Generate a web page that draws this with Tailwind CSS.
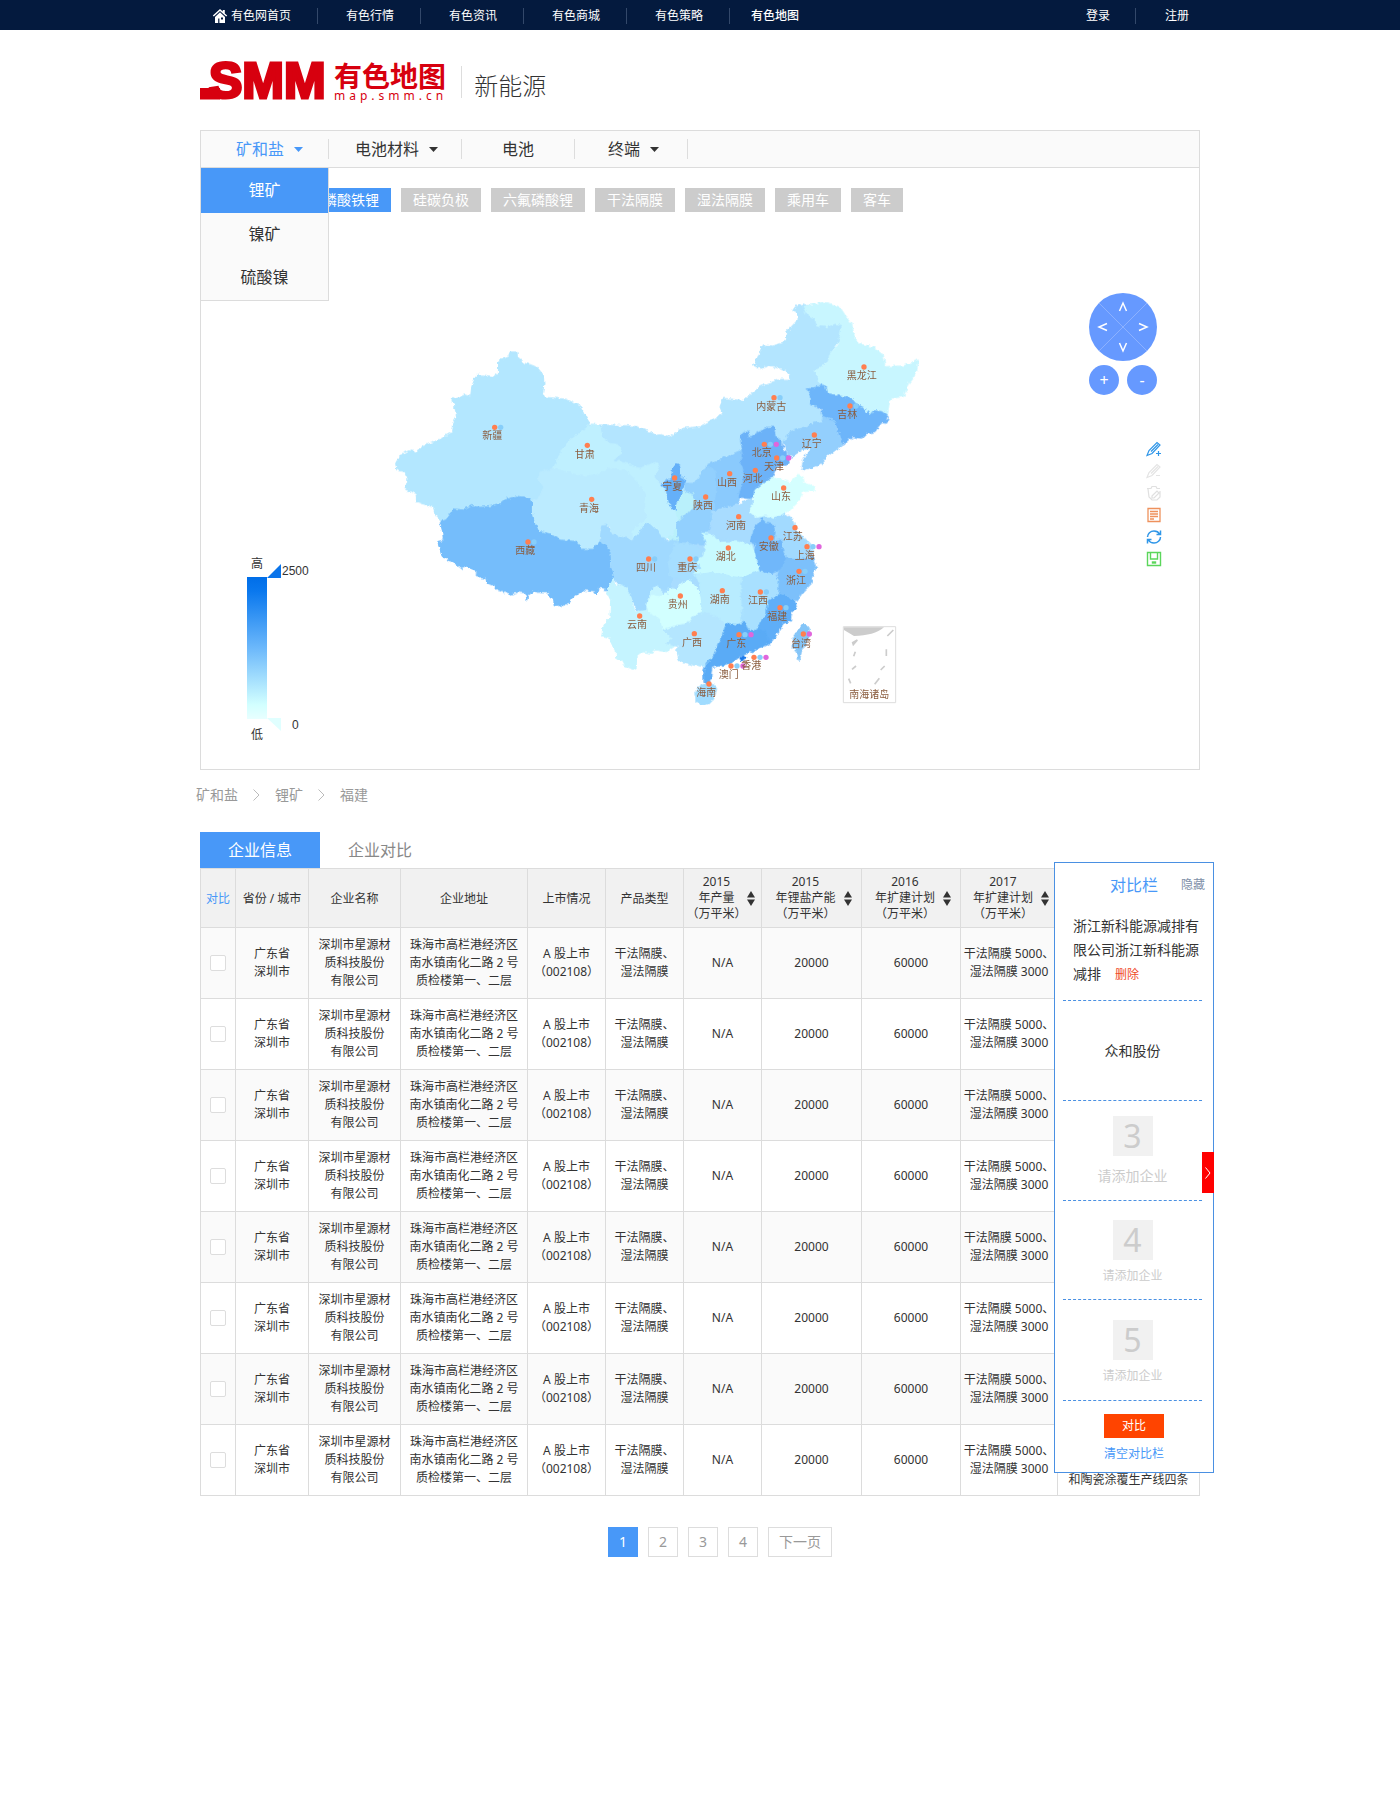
<!DOCTYPE html>
<html lang="zh-CN">
<head>
<meta charset="utf-8">
<meta name="viewport" content="width=device-width, initial-scale=1">
<title>SMM 有色地图 - 新能源</title>
<script src="https://cdn.jsdelivr.net/npm/@tailwindcss/browser@4"></script>
</head>
<body class="min-h-screen bg-white font-['Noto_Sans','Noto_Sans_CJK_SC',sans-serif] text-xs text-[#333]">

<nav class="bg-[#041a3e] text-xs text-white">
  <div class="mx-auto flex h-[30px] max-w-[1000px] items-center pt-0.5">
    <a href="#" class="flex h-4 w-[118px] items-center gap-[3px] border-r border-[#33486a] pl-3">
      <svg class="size-4" viewBox="0 0 16 16" fill="#fff"><path d="M8 1 .8 7.6l1 1L8 3l6.200 5.600 1-1L12.800 5.400V2h-2v1.600z"/><path d="M8 4.300 3 8.900V15h3.200v-4.500h1.200V15H13V8.900zM9 9.500h2v2H9z" fill-rule="evenodd"/></svg>
      <span>有色网首页</span></a>
    <a href="#" class="flex h-4 w-[103px] items-center border-r border-[#33486a] pl-7">有色行情</a>
    <a href="#" class="flex h-4 w-[103px] items-center border-r border-[#33486a] pl-7">有色资讯</a>
    <a href="#" class="flex h-4 w-[103px] items-center border-r border-[#33486a] pl-7">有色商城</a>
    <a href="#" class="flex h-4 w-[103px] items-center border-r border-[#33486a] pl-7">有色策略</a>
    <a href="#" class="flex h-4 items-center pl-[21px] font-medium">有色地图</a>
    <a href="#" class="ml-auto flex h-4 w-[50px] items-center border-r border-[#33486a]">登录</a>
    <a href="#" class="flex h-4 items-center pr-[11px] pl-[29px]">注册</a>
  </div>
</nav>

<div class="mx-auto max-w-[1000px]">
  <header class="flex h-[100px] items-start pt-8">
    <a href="#" class="flex gap-2 text-[#d7000f]" aria-label="SMM 有色地图">
      <svg class="h-10 w-[126px] overflow-visible" viewBox="0 0 126 40" fill="currentColor">
        <path d="M0 26h20v11.500H0z"/>
        <text x="9" y="36" font-family="Liberation Sans, sans-serif" font-size="50" font-weight="700" stroke="currentColor" stroke-width="3">SMM</text>
      </svg>
      <span class="flex flex-col">
        <span class="text-[28px] leading-7 font-bold">有色地图</span>
        <span class="text-xs leading-3 tracking-[4px]">map.smm.cn</span>
      </span>
    </a>
    <h1 class="mt-1 ml-3.5 flex h-8 items-center border-l border-[#ddd] pt-2 pl-3 text-2xl font-light">新能源</h1>
  </header>

  <section class="border border-[#dcdcdc]">
    <div class="relative z-10 flex h-[37px] items-center border-b border-[#dcdcdc] bg-[#fafafa] text-base">
      <a href="#" class="flex h-5 w-32 items-center gap-2.5 border-r border-[#ddd] pl-[35px] text-[#4898f8]">矿和盐<svg class="h-[5px] w-[9px]" viewBox="0 0 9 5" fill="currentColor"><path d="M0 0h9L4.500 5z"/></svg></a>
      <a href="#" class="flex h-5 w-[133px] items-center gap-2.5 border-r border-[#ddd] pl-[26px]">电池材料<svg class="h-[5px] w-[9px]" viewBox="0 0 9 5" fill="currentColor"><path d="M0 0h9L4.500 5z"/></svg></a>
      <a href="#" class="flex h-5 w-[113px] items-center justify-center border-r border-[#ddd]">电池</a>
      <a href="#" class="flex h-5 w-[113px] items-center gap-2.5 border-r border-[#ddd] pl-[33px]">终端<svg class="h-[5px] w-[9px]" viewBox="0 0 9 5" fill="currentColor"><path d="M0 0h9L4.500 5z"/></svg></a>
      <div class="absolute top-[37px] -left-px w-[129px] border border-t-0 border-[#dcdcdc] bg-[#fafafa] pb-px text-center">
        <a href="#" class="block bg-[#4898f8] leading-[45px] text-white">锂矿</a>
        <a href="#" class="block leading-[43px]">镍矿</a>
        <a href="#" class="block leading-[43px]">硫酸镍</a>
      </div>
    </div>

    <div class="flex flex-wrap gap-2.5 pt-5 pl-[110px] text-sm leading-6 text-white">
      <button class="bg-[#4898f8] px-3">磷酸铁锂</button>
      <button class="bg-[#ccc] px-3">硅碳负极</button>
      <button class="bg-[#ccc] px-3">六氟磷酸锂</button>
      <button class="bg-[#ccc] px-3">干法隔膜</button>
      <button class="bg-[#ccc] px-3">湿法隔膜</button>
      <button class="bg-[#ccc] px-3">乘用车</button>
      <button class="bg-[#ccc] px-3">客车</button>
    </div>

    <div class="flex items-start gap-[60px] pt-[78px] pr-[37px] pl-[39px]">
      <svg class="mb-6 h-[190px] w-20 shrink-0 self-end" viewBox="240 555 80 190" fill="#333" font-size="12">
        <defs><linearGradient id="scale" x1="0" y1="0" x2="0" y2="1"><stop offset="0" stop-color="#006ee8"/><stop offset=".1" stop-color="#0a78ee"/><stop offset=".5" stop-color="#6cb8fb"/><stop offset=".9" stop-color="#d2ffff"/><stop offset="1" stop-color="#e8ffff"/></linearGradient></defs>
        <text x="251" y="568">高</text>
        <path d="M247 577h20v142h-20z" fill="url(#scale)"/>
        <path d="M267 578l14-14v14z" fill="#0a74ea"/>
        <path d="M267 718h14v13z" fill="#e0ffff"/>
        <text x="282" y="575" font-family="Liberation Sans, sans-serif">2500</text>
        <text x="292" y="729" font-family="Liberation Sans, sans-serif">0</text>
        <text x="251" y="739">低</text>
      </svg>

      <svg class="mb-[49px] h-[430px] w-[560px]" viewBox="0 0 1680 1290" role="img" aria-label="中国地图">
        <defs><filter id="coast" x="0" y="0" width="1" height="1"><feTurbulence type="fractalNoise" baseFrequency=".08" numOctaves="2" seed="4"/><feDisplacementMap in="SourceGraphic" scale="14" xChannelSelector="R" yChannelSelector="G"/></filter></defs>
        <g id="provinces" filter="url(#coast)" stroke-width="3" stroke-linejoin="round"></g>
        <path d="M1390 1010h157v228h-157z" fill="#fff" stroke="#ddd" stroke-width="3"/>
        <path d="M1392 1012h120c-20 18-50 25-90 26l-30-18z" fill="#ccc"/>
        <path d="M1432 1050l-12 14-2-6zM1426 1085l-5 14M1428 1128l-12 10M1406 1166l6 14M1498 1165l-14 18M1514 1128l-12 12M1519 1078v20M1540 1020l-18 18" fill="#ccc" stroke="#ccc" stroke-width="5"/>
        <g id="dots"></g>
        <g id="labels" font-size="30" text-anchor="middle" fill="#8a5c3e"></g>
      </svg>

      <div class="ml-auto flex w-[78px] shrink-0 flex-col items-center pt-[3px]">
        <div class="relative size-[68px] rounded-full bg-[#6699ff] text-white">
          <svg class="absolute inset-0 size-full" viewBox="0 0 68 68" fill="none" stroke="#8cb1ff"><path d="M10 10l48 48M58 10 10 58"/></svg>
          <button aria-label="上移" class="absolute top-1.5 left-6 size-5"><svg viewBox="0 0 20 20" fill="none" stroke="#fff" stroke-width="1.500"><path d="M6.500 12 10 4l3.500 8"/></svg></button>
          <button aria-label="左移" class="absolute top-6 left-1 size-5"><svg viewBox="0 0 20 20" fill="none" stroke="#fff" stroke-width="1.500"><path d="M14 6.500 6 10l8 3.500"/></svg></button>
          <button aria-label="右移" class="absolute top-6 right-1 size-5"><svg viewBox="0 0 20 20" fill="none" stroke="#fff" stroke-width="1.500"><path d="M6 6.500 14 10l-8 3.500"/></svg></button>
          <button aria-label="下移" class="absolute bottom-1 left-6 size-5"><svg viewBox="0 0 20 20" fill="none" stroke="#fff" stroke-width="1.500"><path d="M6.500 6 10 14l3.500-8"/></svg></button>
        </div>
        <div class="mt-1 flex gap-2">
          <button class="size-[30px] rounded-full bg-[#6699ff] text-base leading-7 text-white">+</button>
          <button class="size-[30px] rounded-full bg-[#6699ff] text-base leading-7 text-white">-</button>
        </div>
        <div class="mt-[46px] flex flex-col gap-1.5 self-end">
          <button aria-label="添加标记"><svg class="block size-4" viewBox="0 0 16 16" fill="none" stroke="#2f96e8" stroke-width="1.200"><path d="M1 14.500 3 9.500 11 1.500l3 2.500-8 8.500zM5 10.500l7-7M10 12.500h5M12.500 10v5"/></svg></button>
          <button aria-label="删除标记"><svg class="block size-4" viewBox="0 0 16 16" fill="none" stroke="#e4e4e4" stroke-width="1.200"><path d="M1 14.500 3 9.500 11 1.500l3 2.500-8 8.500zM5 10.500l7-7M10 12.500h4"/></svg></button>
          <button aria-label="清除标记"><svg class="block size-4" viewBox="0 0 16 16" fill="none" stroke="#e0e0e0" stroke-width="1.200"><path d="M1 3.500h4l1-2h4l1 2h3M2 4l1 8 3 3h5l3-3V6M6 11l5-5 2 2-5 5H6z"/></svg></button>
          <button aria-label="数据视图"><svg class="block size-4" viewBox="0 0 16 16" fill="none" stroke="#ee915c" stroke-width="1.300"><path d="M2 1.500h12v13H2zM4 4.500h8M4 7h8M4 9.500h8M4 12h4"/></svg></button>
          <button aria-label="还原"><svg class="block size-4" viewBox="0 0 16 16" fill="none" stroke="#2f96e8" stroke-width="1.500"><path d="M1.500 8c0-3.500 3-6 6.500-6 2.500 0 4.500 1 5.500 3M14.500 1.500v4h-4M14.500 8c0 3.500-3 6-6.500 6-2.500 0-4.500-1-5.500-3M1.500 14.500v-4h4"/></svg></button>
          <button aria-label="保存"><svg class="block size-4" viewBox="0 0 16 16" fill="none" stroke="#5bd65b" stroke-width="1.400"><path d="M1.500 1.500h13v13h-13zM4.500 1.500V8h7V1.500"/><path d="M6.500 11h3v1h-3z"/></svg></button>
        </div>
      </div>
    </div>
  </section>

  <nav class="-ml-1 flex h-[50px] items-center gap-[15px] text-sm text-[#999]" aria-label="位置">
    <a href="#">矿和盐</a>
    <svg class="h-3 w-[7px]" viewBox="0 0 7 12" fill="none" stroke="#bbb"><path d="M.5.5 6 6 .5 11.500"/></svg>
    <a href="#">锂矿</a>
    <svg class="h-3 w-[7px]" viewBox="0 0 7 12" fill="none" stroke="#bbb"><path d="M.5.5 6 6 .5 11.500"/></svg>
    <a href="#">福建</a>
  </nav>

  <div class="mt-3 flex text-base leading-9">
    <button class="w-[120px] bg-[#4898f8] text-white">企业信息</button>
    <button class="w-[120px] text-[#888]">企业对比</button>
  </div>

  <div class="relative">
    <table class="w-full table-fixed border-collapse text-center text-xs leading-[18px]">
      <colgroup><col class="w-[35px]"><col class="w-[73px]"><col class="w-[92px]"><col class="w-[127px]"><col class="w-[78px]"><col class="w-[78px]"><col class="w-[78px]"><col class="w-[100px]"><col class="w-[99px]"><col class="w-[97px]"><col></colgroup>
      <thead>
        <tr id="head" class="h-[59px] bg-[#f1f1f1]"></tr>
      </thead>
      <tbody id="rows"></tbody>
    </table>

    <aside class="absolute -top-1.5 -right-3.5 flex h-[611px] w-40 flex-col border border-[#4a90e2] bg-white">
      <div class="flex h-11 items-center justify-end gap-[23px] pr-2">
        <h2 class="text-base text-[#4898f8]">对比栏</h2>
        <button class="text-xs text-[#8090a8]">隐藏</button>
      </div>
      <div class="ml-2 w-[139px]">
        <div class="h-[94px] border-b border-dashed border-[#4a90e2] pt-[7px] pl-2.5 text-sm leading-6">浙江新科能源减排有<br>限公司浙江新科能源<br>减排<button class="ml-3.5 text-xs text-[#f04a26]">删除</button></div>
        <div class="flex h-[100px] items-center justify-center border-b border-dashed border-[#4a90e2] text-sm">众和股份</div>
        <div class="flex h-[100px] flex-col items-center gap-2 border-b border-dashed border-[#4a90e2] pt-[15px] text-[#ccc]"><span class="size-10 bg-[#f1f1f1] text-center text-[32px] leading-10">3</span><span class="text-sm leading-6">请添加企业</span></div>
        <div class="flex h-[99px] flex-col items-center gap-2 border-b border-dashed border-[#4a90e2] pt-[19px] text-[#ccc]"><span class="size-10 bg-[#f1f1f1] text-center text-[32px] leading-10">4</span><span class="text-xs">请添加企业</span></div>
        <div class="flex h-[101px] flex-col items-center gap-2 border-b border-dashed border-[#4a90e2] pt-5 text-[#ccc]"><span class="size-10 bg-[#f1f1f1] text-center text-[32px] leading-10">5</span><span class="text-xs">请添加企业</span></div>
      </div>
      <div class="mt-[13px] flex flex-col items-center gap-2">
        <button class="h-6 w-[60px] bg-[#ff4400] text-xs text-white">对比</button>
        <button class="text-xs text-[#4898f8]">清空对比栏</button>
      </div>
      <button aria-label="收起" class="absolute top-[289px] -right-px flex h-[41px] w-3 items-center justify-center bg-[#ff0000]"><svg class="h-3 w-1.5" viewBox="0 0 6 12" fill="none" stroke="#fff"><path d="M.5.5 5 6 .5 11.500"/></svg></button>
    </aside>
  </div>

  <nav class="mt-[31px] mb-10 flex justify-center gap-2.5 pl-10 text-sm text-[#999]" aria-label="分页">
    <a href="#" class="size-[30px] bg-[#4898f8] text-center leading-[30px] text-white">1</a>
    <a href="#" class="size-[30px] border border-[#ddd] text-center leading-7">2</a>
    <a href="#" class="size-[30px] border border-[#ddd] text-center leading-7">3</a>
    <a href="#" class="size-[30px] border border-[#ddd] text-center leading-7">4</a>
    <a href="#" class="h-[30px] border border-[#ddd] px-2.5 leading-7">下一页</a>
  </nav>
</div>

<script>
// Provinces: fill, x offset, y offset, outline
const provinces = [
 ['#b9f0fb',0,0,'830,530 960,560 990,600 990,720 880,760 830,700'],
 ['#92d0fe',0,0,'890,700 920,680 990,640 1020,720 1000,800 900,780'],
 ['#a8dcff',0,0,'900,770 1100,660 1240,700 1260,800 1240,900 1180,1000 1000,1050 860,1000 820,900'],
 ['#b3e7ff',0,0,'390,186 411,186 412,200 435,220 470,230 490,255 492,280 487,316 500,322 560,328 602,350 620,385 632,403 600,430 570,450 545,480 528,520 540,560 500,640 465,640 420,660 300,690 190,700 165,670 160,650 110,635 108,612 75,595 84,570 75,545 50,540 47,520 60,495 95,480 110,487 130,467 160,457 215,428 218,400 230,380 222,340 212,328 255,315 272,320 275,290 290,253 340,260 355,250 356,212 385,200'],
 ['#b3e5ff',780,0,'-148,403 -120,405 -40,407 -10,410 50,435 62,434 90,440 130,415 180,410 248,372 240,350 250,325 310,332 330,315 360,290 420,268 455,268 445,250 425,235 380,228 364,235 340,225 352,205 368,165 400,168 435,155 440,125 475,88 472,68 458,62 466,50 490,42 510,50 560,80 600,80 607,105 600,150 575,185 565,215 525,245 540,270 570,290 530,350 570,390 520,410 480,420 440,455 410,460 305,490 305,520 240,560 165,600 135,620 60,620 40,600 30,560 -80,540 -115,440'],
 ['#bff0ff',0,0,'632,403 660,405 665,440 690,460 720,465 725,490 700,510 740,520 780,535 810,522 830,515 838,530 822,560 845,590 860,615 885,640 890,700 880,735 850,750 830,720 790,760 750,740 750,700 700,570 610,558 528,545 520,535 545,480 570,450 600,430'],
 ['#bbebff',0,0,'480,545 520,535 570,550 610,560 650,555 690,535 740,545 770,575 795,610 790,650 800,680 780,700 755,720 757,750 700,750 690,710 672,705 662,725 655,785 610,780 590,757 540,752 480,727 463,705 457,670 458,635 480,620 490,590 475,565'],
 ['#a0d9ff',0,0,'665,705 680,703 700,735 755,750 785,720 795,700 815,705 835,725 855,750 885,752 930,765 920,800 870,830 880,870 865,900 830,895 805,930 800,960 775,965 755,925 735,895 700,870 690,790 660,755'],
 ['#74bdfb',0,570,'180,125 200,118 212,102 222,87 250,90 275,77 300,82 330,80 360,73 375,60 410,48 450,55 457,75 457,100 465,135 480,155 510,162 540,180 590,185 610,208 640,208 660,185 680,200 690,220 692,260 700,290 688,330 672,328 660,322 650,345 640,332 610,330 575,355 560,375 523,377 520,355 508,352 505,338 480,338 460,332 447,345 442,362 436,338 415,336 390,343 350,328 340,315 320,308 318,295 300,293 290,280 262,258 245,266 225,250 185,230 180,205 173,185 190,180 188,155'],
 ['#c8f6ff',780,0,'490,50 550,36 575,42 600,52 615,75 635,100 640,130 652,160 700,172 730,195 735,230 790,228 835,210 830,240 820,260 805,280 790,320 750,325 742,378 715,378 690,382 640,355 560,320 555,285 535,275 535,258 522,245 545,230 565,215 570,190 595,165 607,105 585,100 560,110 530,105 525,85 500,72'],
 ['#6db5fa',780,0,'502,296 525,296 540,285 555,287 560,310 600,318 635,325 650,345 670,352 690,375 700,362 725,365 745,380 740,400 725,398 715,410 705,425 680,430 665,445 640,440 625,450 607,465 597,440 585,400 550,380 545,360 525,345 512,345 515,320'],
 ['#93cffd',780,0,'550,380 582,392 597,440 607,465 560,500 540,525 520,530 485,542 490,510 510,475 490,478 460,498 440,485 430,460 442,440 450,425 500,410 520,400 545,395'],
 ['#8acafd',780,0,'200,525 260,500 305,480 315,560 300,630 290,645 215,665 190,640 190,560'],
 ['#92d0fe',780,0,'135,580 165,580 200,530 225,540 228,600 220,660 210,695 200,730 190,765 150,760 110,740 110,700 140,670 165,650 160,620 135,605'],
 ['#b9f0fb',780,0,'118,600 160,615 165,640 140,670 110,665'],
 ['#6cb2f8',780,0,'305,430 325,426 330,442 350,430 385,412 402,412 405,440 425,455 430,480 455,500 440,525 410,530 395,565 370,585 360,600 335,628 295,620 310,580 312,540 302,520 308,490 302,450'],
 ['#65b0f9',780,0,'105,520 120,525 118,555 138,570 125,600 118,625 108,640 105,660 85,640 80,600 65,585 75,575 95,565 98,530'],
 ['#a8dcff',780,0,'215,665 290,645 335,625 360,660 370,690 345,710 350,765 300,760 260,750 230,740 205,735 215,695'],
 ['#a2daff',780,570,'365,110 400,112 430,98 460,120 475,160 495,175 515,200 520,225 480,245 440,240 420,225 405,190 400,160 380,130'],
 ['#d4ffff',780,0,'345,600 395,562 430,570 450,578 475,553 490,562 492,578 525,590 520,603 490,605 470,640 445,665 430,672 400,685 380,675 350,682 328,665 340,640'],
 ['#6fb7fa',780,570,'365,115 378,130 400,135 405,160 400,185 425,180 428,215 440,235 420,270 390,282 350,270 355,240 340,220 350,195 330,185 345,140 355,130'],
 ['#a6deff',780,570,'105,190 145,190 170,200 190,215 175,245 185,262 175,290 150,310 130,300 90,290 85,250'],
 ['#c8faff',780,570,'185,160 210,162 230,175 240,187 290,185 335,195 345,225 357,275 310,290 260,290 220,282 160,280 185,265 170,240 190,230 200,190'],
 ['#7cc0fb',780,570,'438,237 480,240 520,230 530,260 515,290 515,310 490,335 470,362 440,358 415,345 415,300 410,285 425,265'],
 ['#a8e0ff',780,570,'305,295 350,275 400,285 415,300 412,345 385,360 380,400 365,425 350,452 315,452 300,430 305,380 300,340'],
 ['#b8ecff',780,570,'165,285 220,277 265,287 305,295 300,340 305,380 302,430 255,440 235,415 210,408 185,400 180,350 180,310'],
 ['#c5f4ff',0,0,'700,868 705,890 715,883 735,890 755,925 765,965 800,962 802,935 815,900 830,888 845,900 850,985 860,1020 900,1045 885,1068 860,1085 825,1080 815,1090 790,1085 770,1100 768,1140 745,1132 730,1125 725,1110 710,1105 708,1080 695,1065 690,1045 665,1040 668,1015 690,980 692,930 680,905 690,885'],
 ['#d2ffff',780,570,'85,325 110,328 120,315 145,300 165,315 180,350 185,405 160,412 140,435 110,438 70,450 60,415 30,400 20,375 35,345 60,350 85,340'],
 ['#b4e6ff',780,570,'70,450 110,437 140,432 160,410 190,398 235,413 258,440 250,470 230,500 215,540 195,560 160,555 118,545 110,510 115,500 80,490 100,475 85,465'],
 ['#5eaef8',780,570,'415,342 440,350 465,365 470,385 455,400 450,425 430,430 410,465 385,497 370,460 350,452 362,425 380,400 385,365'],
 ['#5aabf6',780,570,'258,430 290,435 315,427 322,450 350,452 375,455 385,492 340,512 300,530 280,545 250,555 215,562 212,600 205,612 192,605 192,570 200,550 220,530 235,490 250,465'],
 ['#a0dcff',780,570,'185,612 215,608 230,625 225,645 210,670 190,675 168,665 165,640'],
 ['#84c5f8',780,570,'487,434 500,434 508,445 505,475 485,515 477,545 473,522 460,505 460,475'],
 ['#1677ea',780,570,'300,535 310,528 318,534 305,543'],
];
document.getElementById('provinces').innerHTML = provinces.map(([c, x, y, p]) =>
  `<polygon transform="translate(${x} ${y})" fill="${c}" stroke="${c}" points="${p}"/>`).join('');

// Markers: name, label centre x/y, first dot x/y, dot kinds (o orange, b blue, p pink)
const marks = [
 ['新疆',337,437,344,412,'ob'],['甘肃',614,492,622,466,'o'],['青海',627,654,635,628,'o'],['西藏',436,782,444,756,'ob'],
 ['四川',798,832,806,807,'ob'],['云南',771,1004,779,978,'o'],['黑龙江',1445,256,1452,231,'o'],['内蒙古',1174,348,1182,323,'ob'],
 ['吉林',1402,373,1410,348,'ob'],['辽宁',1295,460,1303,435,'o'],['北京',1145,488,1153,463,'obp'],['天津',1182,530,1190,504,'obp'],
 ['河北',1118,566,1126,541,'o'],['山西',1041,576,1049,551,'o'],['宁夏',877,589,884,564,'o'],['山东',1203,619,1211,594,'o'],
 ['陕西',969,647,977,621,'o'],['河南',1068,705,1076,680,'o'],['江苏',1238,738,1245,713,'o'],['安徽',1166,769,1173,744,'o'],
 ['上海',1274,795,1281,770,'obp'],['湖北',1037,799,1045,774,'o'],['浙江',1248,870,1257,844,'ob'],['重庆',922,832,930,807,'ob'],
 ['湖南',1019,928,1027,902,'o'],['江西',1134,931,1141,906,'ob'],['贵州',893,943,901,918,'o'],['福建',1192,979,1200,953,'ob'],
 ['广西',936,1056,943,1031,'o'],['广东',1069,1060,1077,1034,'obp'],['台湾',1263,1059,1270,1032,'op'],['香港',1114,1126,1122,1102,'obp'],
 ['澳门',1046,1153,1053,1128,'obp'],['海南',979,1207,987,1182,'o'],['南海诸岛',1468,1212,0,0,''],
];
const tone = {o: '#ff7f50', b: '#87cefa', p: '#e066dc'};
document.getElementById('dots').innerHTML = marks.map(m =>
  [...m[5]].map((k, i) => `<circle cx="${m[3] + i * 18}" cy="${m[4]}" r="8" fill="${tone[k]}"/>`).join('')).join('');
document.getElementById('labels').innerHTML = marks.map(m => `<text x="${m[1]}" y="${m[2] + 11}">${m[0]}</text>`).join('');

const sorter = '<svg class="h-[15px] w-2 shrink-0" viewBox="0 0 8 15" fill="#333"><path d="M0 6.500h8L4 0zM0 8.500h8L4 15z"/></svg>';
const cols = ['对比','省份 / 城市','企业名称','企业地址','上市情况','产品类型','2015<br>年产量','2015<br>年锂盐产能','2016<br>年扩建计划','2017<br>年扩建计划',''];
document.getElementById('head').innerHTML = cols.map((c, i) => {
  if (i > 5 && i < 10) return `<th class="border border-[#dcdcdc] font-normal leading-4"><button class="${i === 6 ? 'flex w-full items-center justify-center pr-1' : 'flex w-full items-center justify-center gap-2 pl-1'}"><span>${c}<br>（万平米）</span>${sorter}</button></th>`;
  return i ? `<th class="border border-[#dcdcdc] pt-0.5 font-normal">${c}</th>` : `<th class="border border-[#dcdcdc] pt-0.5 font-normal text-[#4898f8]">${c}</th>`;
}).join('');

const cells = ['广东省<br>深圳市','深圳市星源材<br>质科技股份<br>有限公司','珠海市高栏港经济区<br>南水镇南化二路 2 号<br>质检楼第一、二层','A 股上市<br>（002108）','干法隔膜、<br>湿法隔膜','N/A','20000','60000','干法隔膜 5000、<br>湿法隔膜 3000'];
document.getElementById('rows').innerHTML = Array.from({length: 8}, (_, r) =>
  `<tr class="h-[71px] odd:bg-[#fafafa]"><td class="border border-[#dcdcdc]"><input type="checkbox" aria-label="对比第${r + 1}行" class="mx-auto block size-4 appearance-none rounded-xs border border-[#ddd] bg-white"></td>` +
  cells.map(c => `<td class="border border-[#dcdcdc] whitespace-nowrap">${c}</td>`).join('') +
  `<td class="border border-[#dcdcdc] pb-1.5 align-bottom">${r === 7 ? '和陶瓷涂覆生产线四条' : ''}</td></tr>`).join('');
</script>
</body>
</html>
